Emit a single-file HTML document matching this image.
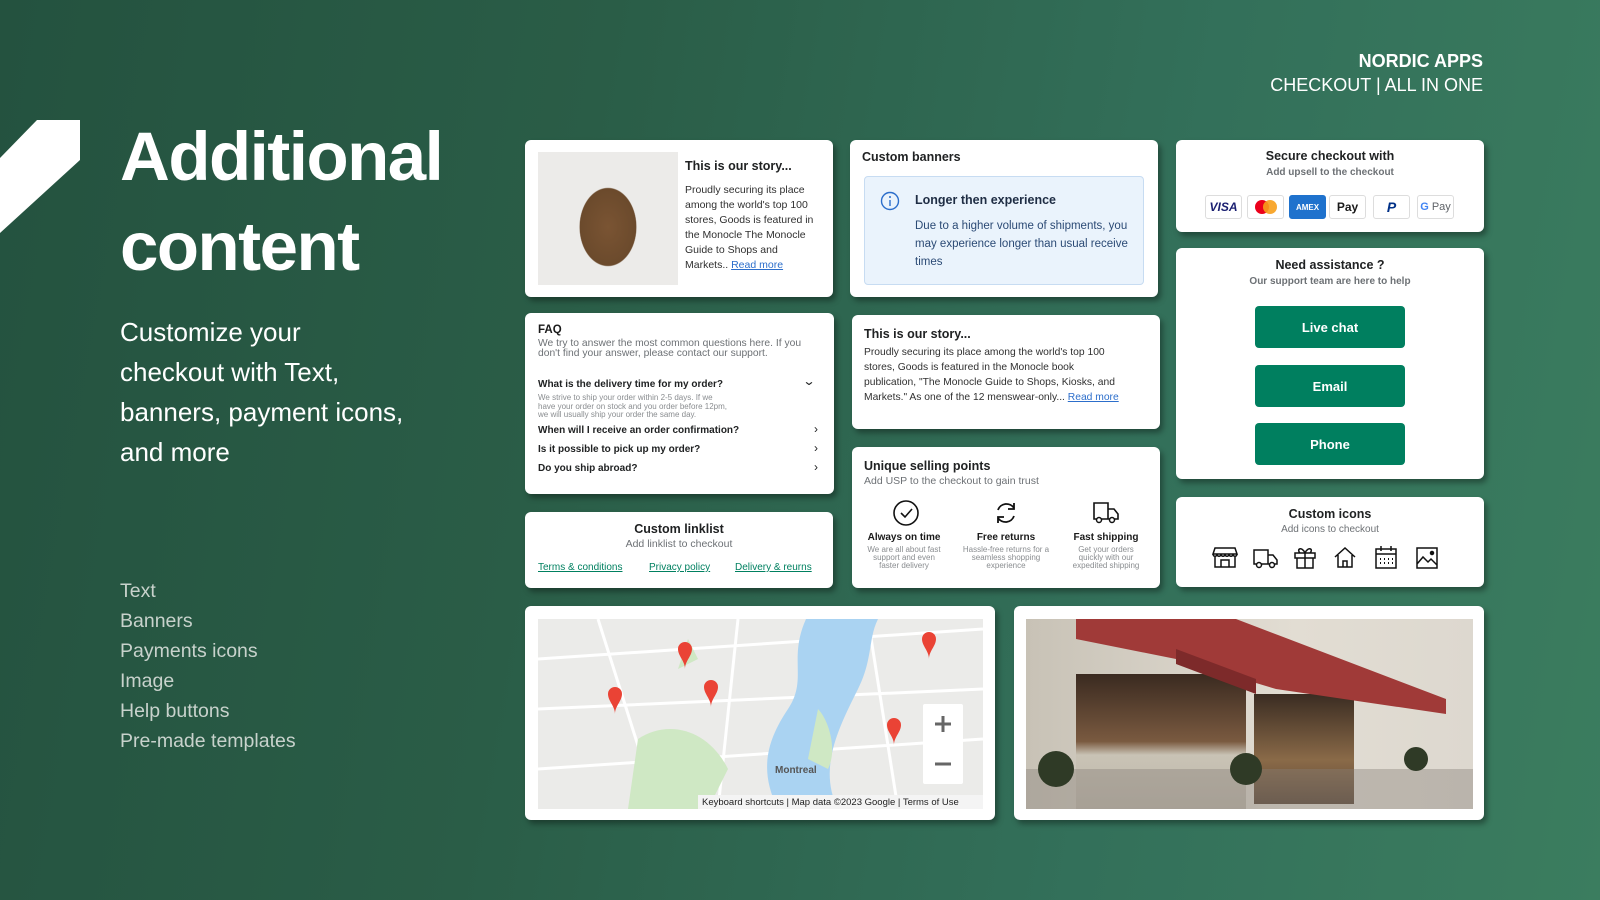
<!DOCTYPE html>
<html><head><meta charset="utf-8"><style>
*{margin:0;padding:0;box-sizing:border-box}
body{width:1600px;height:900px;overflow:hidden;font-family:"Liberation Sans",sans-serif;background:linear-gradient(100deg,#24523f 0%,#2a5d47 35%,#33705a 70%,#3b7d5f 100%);position:relative;color:#1a1a1a}
.abs{position:absolute}
.card{position:absolute;background:#fff;border-radius:6px;box-shadow:3px 4px 6px rgba(0,0,0,.35)}
.t13{font-size:12.5px;font-weight:bold;color:#202223}
.grey{color:#6d7175}
.btn{position:absolute;left:79px;width:150px;height:42px;background:#007f5f;border-radius:4px;color:#fff;font-size:13px;font-weight:bold;display:flex;align-items:center;justify-content:center}
.pay{position:absolute;top:0;width:37px;height:24px;border:1px solid #ddd;border-radius:3px;display:flex;align-items:center;justify-content:center;font-size:11px;font-weight:bold;background:#fff}
.q{position:absolute;left:13px;font-size:10px;font-weight:bold;color:#202223}
.chev{position:absolute;right:16px;font-size:12px;color:#202223}
a{color:#2c6ecb}
</style></head><body>
<svg class="abs" style="left:0;top:0" width="90" height="240"><polygon points="37,120 80,120 80,160 0,233 0,158" fill="#fff"/></svg>
<div class="abs" style="left:120px;top:112px;font-size:69px;font-weight:bold;color:#fff;line-height:90px;letter-spacing:-1.5px">Additional<br>content</div>
<div class="abs" style="left:120px;top:312px;font-size:26px;color:#fff;line-height:40px">Customize your<br>checkout with Text,<br>banners, payment icons,<br>and more</div>
<div class="abs" style="left:120px;top:576px;font-size:19.5px;color:#c8d2cc;line-height:30px">Text<br>Banners<br>Payments icons<br>Image<br>Help buttons<br>Pre-made templates</div>
<div class="abs" style="right:117px;top:49px;text-align:right;color:#fff;font-size:18px;line-height:24px"><b>NORDIC APPS</b><br>CHECKOUT | ALL IN ONE</div>

<!-- story card -->
<div class="card" style="left:525px;top:140px;width:308px;height:157px">
 <div class="abs" style="left:13px;top:12px;width:140px;height:133px;background:radial-gradient(ellipse 40px 55px at 70px 75px,#7a5433 0%,#6b4a2c 70%,transparent 72%),#ecebe9"></div>
 <div class="abs t13" style="left:160px;top:19px">This is our story...</div>
 <div class="abs" style="left:160px;top:43px;font-size:10.5px;line-height:15px;color:#303030;width:132px">Proudly securing its place among the world's top 100 stores, Goods is featured in the Monocle The Monocle Guide to Shops and Markets.. <a style="text-decoration:underline">Read more</a></div>
</div>
<!-- banners -->
<div class="card" style="left:850px;top:140px;width:308px;height:157px">
 <div class="abs t13" style="left:12px;top:10px;font-weight:600">Custom banners</div>
 <div class="abs" style="left:14px;top:36px;width:280px;height:109px;background:#eaf3fc;border:1px solid #c7dcf2;border-radius:4px">
  <svg class="abs" style="left:15px;top:14px" width="20" height="20"><circle cx="10" cy="10" r="8.5" fill="none" stroke="#2c6ecb" stroke-width="1.4"/><line x1="10" y1="9" x2="10" y2="15" stroke="#2c6ecb" stroke-width="1.4"/><circle cx="10" cy="6" r="1" fill="#2c6ecb"/></svg>
  <div class="abs" style="left:50px;top:16px;font-size:12.5px;font-weight:bold;color:#1f2d44">Longer then experience</div>
  <div class="abs" style="left:50px;top:40px;font-size:11.5px;line-height:18px;color:#2b4a75;width:225px">Due to a higher volume of shipments, you may experience longer than usual receive times</div>
 </div>
</div>
<!-- secure -->
<div class="card" style="left:1176px;top:140px;width:308px;height:92px;text-align:center">
 <div class="abs t13" style="left:0;right:0;top:9px">Secure checkout with</div>
 <div class="abs grey" style="left:0;right:0;top:27px;font-size:10px;font-weight:bold">Add upsell to the checkout</div>
 <div class="abs" style="left:29px;top:55px;width:260px;height:24px">
  <div class="pay" style="left:0;color:#1a1f71;font-style:italic;font-size:12px">VISA</div>
  <div class="pay" style="left:42px"><svg width="26" height="16"><circle cx="9" cy="8" r="7" fill="#eb001b"/><circle cx="17" cy="8" r="7" fill="#f79e1b" opacity=".9"/></svg></div>
  <div class="pay" style="left:84px;background:#1f72cd;color:#fff;font-size:8px;border-color:#1f72cd">AMEX</div>
  <div class="pay" style="left:124px;font-size:12px"> Pay</div>
  <div class="pay" style="left:168px;color:#003087;font-style:italic;font-size:14px">P</div>
  <div class="pay" style="left:212px;font-weight:normal;color:#5f6368"><b style="color:#4285f4">G</b>&nbsp;Pay</div>
 </div>
</div>
<!-- FAQ -->
<div class="card" style="left:525px;top:313px;width:309px;height:181px">
 <div class="abs" style="left:13px;top:11px;font-size:11.5px;font-weight:bold">FAQ</div>
 <div class="abs grey" style="left:13px;top:26px;font-size:10.3px;line-height:10px;width:265px">We try to answer the most common questions here. If you don't find your answer, please contact our support.</div>
 <div class="q" style="top:66px">What is the delivery time for my order?</div><div class="chev" style="top:61px;right:20px;transform:scaleX(1.3)">⌄</div>
 <div class="abs grey" style="left:13px;top:81px;font-size:8px;line-height:8.5px;width:190px;color:#8a8d90">We strive to ship your order within 2-5 days. If we have your order on stock and you order before 12pm, we will usually ship your order the same day.</div>
 <div class="q" style="top:112px">When will I receive an order confirmation?</div><div class="chev" style="top:109px">›</div>
 <div class="q" style="top:131px">Is it possible to pick up my order?</div><div class="chev" style="top:128px">›</div>
 <div class="q" style="top:150px">Do you ship abroad?</div><div class="chev" style="top:147px">›</div>
</div>
<!-- story 2 -->
<div class="card" style="left:852px;top:315px;width:308px;height:114px">
 <div class="abs t13" style="left:12px;top:12px">This is our story...</div>
 <div class="abs" style="left:12px;top:30px;font-size:10.3px;line-height:15px;color:#303030;width:262px">Proudly securing its place among the world's top 100 stores, Goods is featured in the Monocle book publication, "The Monocle Guide to Shops, Kiosks, and Markets." As one of the 12 menswear-only... <a style="text-decoration:underline">Read more</a></div>
</div>
<!-- assistance -->
<div class="card" style="left:1176px;top:248px;width:308px;height:231px;text-align:center">
 <div class="abs t13" style="left:0;right:0;top:10px">Need assistance ?</div>
 <div class="abs grey" style="left:0;right:0;top:28px;font-size:10px;font-weight:bold">Our support team are here to help</div>
 <div class="btn" style="top:58px">Live chat</div>
 <div class="btn" style="top:117px">Email</div>
 <div class="btn" style="top:175px">Phone</div>
</div>
<!-- linklist -->
<div class="card" style="left:525px;top:512px;width:308px;height:76px;text-align:center">
 <div class="abs t13" style="left:0;right:0;top:10px;font-weight:600">Custom linklist</div>
 <div class="abs grey" style="left:0;right:0;top:26px;font-size:10.5px">Add linklist to checkout</div>
 <div class="abs" style="left:13px;top:50px;font-size:10px;color:#008060;text-decoration:underline">Terms &amp; conditions</div>
 <div class="abs" style="left:124px;top:50px;font-size:10px;color:#008060;text-decoration:underline">Privacy policy</div>
 <div class="abs" style="left:210px;top:50px;font-size:10px;color:#008060;text-decoration:underline">Delivery &amp; reurns</div>
</div>
<!-- USP -->
<div class="card" style="left:852px;top:447px;width:308px;height:141px">
 <div class="abs t13" style="left:12px;top:12px">Unique selling points</div>
 <div class="abs grey" style="left:12px;top:28px;font-size:10.5px">Add USP to the checkout to gain trust</div>
 <svg class="abs" style="left:40px;top:52px" width="28" height="28"><circle cx="14" cy="14" r="12" fill="none" stroke="#111" stroke-width="1.6"/><path d="M9 14l4 4 7-8" fill="none" stroke="#111" stroke-width="1.6"/></svg>
 <svg class="abs" style="left:140px;top:52px" width="28" height="28"><path d="M6 11a9 9 0 0 1 16-2M22 17a9 9 0 0 1-16 2" fill="none" stroke="#111" stroke-width="1.8"/><path d="M22 4v6h-6M6 24v-6h6" fill="none" stroke="#111" stroke-width="1.8"/></svg>
 <svg class="abs" style="left:240px;top:52px" width="28" height="28"><path d="M2 4h14v16H2zM16 10h6l4 5v5h-10" fill="none" stroke="#111" stroke-width="1.6"/><circle cx="7" cy="21" r="2.5" fill="#fff" stroke="#111" stroke-width="1.5"/><circle cx="20" cy="21" r="2.5" fill="#fff" stroke="#111" stroke-width="1.5"/></svg>
 <div class="abs" style="left:0;width:104px;top:85px;text-align:center"><div style="font-size:10px;font-weight:bold">Always on time</div><div style="font-size:8px;line-height:8px;color:#8a8d90;margin-top:3px;padding:0 12px">We are all about fast support and even faster delivery</div></div>
 <div class="abs" style="left:102px;width:104px;top:85px;text-align:center"><div style="font-size:10px;font-weight:bold">Free returns</div><div style="font-size:8px;line-height:8px;color:#8a8d90;margin-top:3px;padding:0 8px">Hassle-free returns for a seamless shopping experience</div></div>
 <div class="abs" style="left:202px;width:104px;top:85px;text-align:center"><div style="font-size:10px;font-weight:bold">Fast shipping</div><div style="font-size:8px;line-height:8px;color:#8a8d90;margin-top:3px;padding:0 12px">Get your orders quickly with our expedited shipping</div></div>
</div>
<!-- custom icons -->
<div class="card" style="left:1176px;top:497px;width:308px;height:90px;text-align:center">
 <div class="abs t13" style="left:0;right:0;top:10px;font-weight:600">Custom icons</div>
 <div class="abs grey" style="left:0;right:0;top:27px;font-size:10px">Add icons to checkout</div>
 <svg class="abs" style="left:36px;top:47px" width="240" height="26" fill="none" stroke="#111" stroke-width="1.5">
  <path d="M3 4h20l2 6H1zM1 10c0 3 4 3 4 0c0 3 4 3 4 0c0 3 4 3 4 0c0 3 4 3 4 0c0 3 4 3 4 0c0 3 4 3 4 0M3 13v10h20V13M9 23v-7h8v7"/>
  <path d="M42 6h14v14H42zM56 11h5l4 5v4h-9"/><circle cx="47" cy="21" r="2.5" fill="#fff"/><circle cx="60" cy="21" r="2.5" fill="#fff"/>
  <path d="M83 9h20v5H83zM85 14v10h16V14M93 9v15M93 9c-3-7-9-4-5 0M93 9c3-7 9-4 5 0"/>
  <path d="M123 13l10-9 10 9M126 11v12h14V11M131 23v-6h4v6"/>
  <path d="M164 5h20v19h-20zM164 10h20M169 2v5M179 2v5"/><path d="M168 15h1M172 15h1M176 15h1M180 15h1M168 19h1M172 19h1M176 19h1M180 19h1" stroke-width="2"/>
  <path d="M205 4h20v20h-20zM205 20l6-7 5 5 3-3 6 6"/><circle cx="220" cy="9" r="1.5" fill="#111"/>
 </svg>
</div>
<!-- map -->
<div class="card" style="left:525px;top:606px;width:470px;height:214px">
 <div class="abs" style="left:13px;top:13px;width:445px;height:190px;overflow:hidden;background:#e9eaea">
  <svg width="445" height="190">
   <rect width="445" height="190" fill="#ebebe9"/>
   <path d="M0 40L445 10M0 90L445 70M60 0L120 190M200 0L180 190M330 0L360 190M0 150L445 120" stroke="#fff" stroke-width="3"/>
   <path d="M100 120C130 100 170 110 190 150L170 190H90z" fill="#cfe8c4"/>
   <path d="M150 20L160 40L140 50z" fill="#cfe8c4"/>
   <path d="M268 0C250 40 270 60 250 90C230 120 220 150 240 190H300C280 150 300 110 320 70C335 40 330 20 340 0z" fill="#aad3f2"/>
   <path d="M280 90C290 100 300 130 290 150L270 140z" fill="#cfe8c4"/>
   <g fill="#ea4335"><path d="M140 30a7 7 0 0 1 14 0c0 7-7 12-7 20c0-8-7-13-7-20z"/><path d="M70 75a7 7 0 0 1 14 0c0 7-7 12-7 20c0-8-7-13-7-20z"/><path d="M166 68a7 7 0 0 1 14 0c0 7-7 12-7 20c0-8-7-13-7-20z"/><path d="M384 20a7 7 0 0 1 14 0c0 7-7 12-7 20c0-8-7-13-7-20z"/><path d="M349 106a7 7 0 0 1 14 0c0 7-7 12-7 20c0-8-7-13-7-20z"/></g>
   <rect x="385" y="85" width="40" height="80" rx="2" fill="#fff"/><path d="M397 105h16M405 97v16M397 145h16" stroke="#666" stroke-width="3"/>
   <rect x="160" y="176" width="285" height="14" fill="#f4f4f4"/>
   <text x="164" y="186" font-size="9.5" font-family="Liberation Sans" fill="#222">Keyboard shortcuts  |  Map data ©2023 Google  |  Terms of Use</text>
   <text x="237" y="154" font-size="10" font-family="Liberation Sans" fill="#555" font-weight="bold">Montreal</text>
  </svg>
 </div>
</div>
<!-- photo -->
<div class="card" style="left:1014px;top:606px;width:470px;height:214px">
 <div class="abs" style="left:12px;top:13px;width:447px;height:190px;overflow:hidden;background:#d8d3c9">
  <div class="abs" style="left:0;top:0;width:447px;height:190px;background:linear-gradient(90deg,#c8c2b6,#e2ddd3 60%,#ddd8cf)"></div>
  <div class="abs" style="left:50px;top:55px;width:170px;height:135px;background:linear-gradient(180deg,#3a2a20,#7a5a40 50%,#c9c3b5 60%,#bdb6aa)"></div>
  <div class="abs" style="left:228px;top:75px;width:100px;height:110px;background:linear-gradient(180deg,#3a2c22,#8a6a48 60%,#5a4636)"></div>
  <svg class="abs" style="left:0;top:0" width="447" height="190"><polygon points="50,0 210,0 420,80 420,95 250,70 150,40 50,20" fill="#a03a38"/><polygon points="150,30 230,60 230,75 150,45" fill="#7d2a2a"/><path d="M0 150h447v40H0z" fill="#888077" opacity=".4"/><circle cx="30" cy="150" r="18" fill="#2f3a26"/><circle cx="220" cy="150" r="16" fill="#2f3a26"/><circle cx="390" cy="140" r="12" fill="#2f3a26"/></svg>
 </div>
</div>
</body></html>
